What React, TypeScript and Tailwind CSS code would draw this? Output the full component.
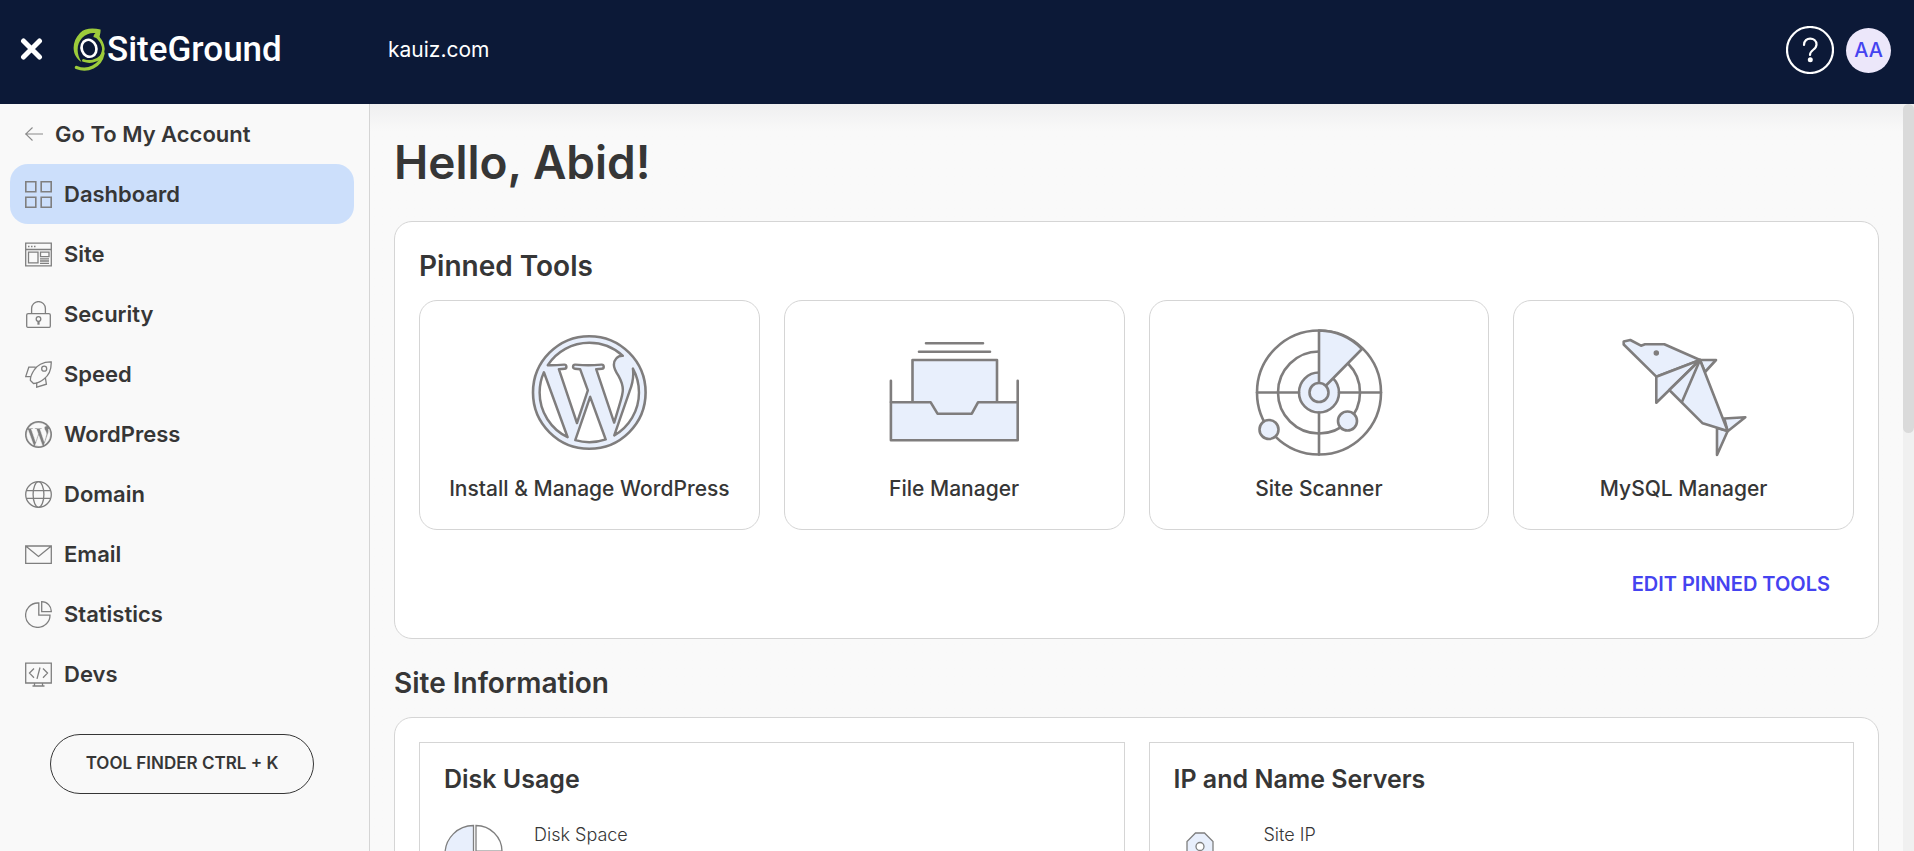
import React from "react";

const WP_CUTS =
  "M61.7 169.4l101.5 278C92.2 413 43.3 340.2 43.3 256c0-30.9 6.6-60.1 18.4-86.6zm337.9 75.9c0-26.3-9.4-44.5-17.5-58.7-10.8-17.5-20.9-32.4-20.9-49.9 0-19.6 14.8-37.8 35.7-37.8.9 0 1.8.1 2.8.2-37.9-34.7-88.3-55.9-143.7-55.9-74.3 0-139.7 38.1-177.8 95.9 5 .2 9.7.3 13.7.3 22.2 0 56.7-2.7 56.7-2.7 11.5-.7 12.8 16.2 1.4 17.5 0 0-11.5 1.3-24.3 2l77.5 230.4L249.8 247l-33.1-90.8c-11.5-.7-22.3-2-22.3-2-11.5-.7-10.1-18.2 1.3-17.5 0 0 35.1 2.7 56 2.7 22.2 0 56.7-2.7 56.7-2.7 11.5-.7 12.8 16.2 1.4 17.5 0 0-11.5 1.3-24.3 2l76.9 228.7 21.2-70.9c9-29.4 16-50.5 16-68.7zm-139.9 29.3l-63.8 185.5c19.1 5.6 39.2 8.7 60.1 8.7 24.8 0 48.5-4.3 70.6-12.1-.6-.9-1.1-1.9-1.5-2.9l-65.4-179.2zm183-120.7c.9 6.8 1.4 14 1.4 21.9 0 21.6-4 45.8-16.2 76.2l-65 187.9C426.2 403 468.7 334.5 468.7 256c0-37-9.4-71.8-26-102.1z";

function NavIcon({ children }: { children: React.ReactNode }) {
  return (
    <svg viewBox="0 0 27 27" className="size-[27px] shrink-0" fill="none" stroke="#7f7f7f" strokeWidth="1.3" aria-hidden="true">
      {children}
    </svg>
  );
}

const navItems: { label: string; icon: React.ReactNode }[] = [
  {
    label: "Dashboard",
    icon: <path strokeWidth="1.6" d="M.8.8h10v10h-10zM16.2.8h10v10h-10zM.8 16.2h10v10h-10zM16.2 16.2h10v10h-10z" />,
  },
  {
    label: "Site",
    icon: (
      <>
        <path d="M.7 2.2h25.6v22.6H.7zM.7 8.5h25.6M3.5 11.200h9.500v10.600h-9.500zM15.500 11.200h8.500v4.500h-8.500zM15 17.800h9M15 20h9M15 22.300h9" />
        <path strokeWidth="1.600" d="M3 5.500h1.500M6 5.500h1.500M9 5.500h1.500" />
      </>
    ),
  },
  {
    label: "Security",
    icon: (
      <>
        <rect x="1.700" y="12.600" width="23.600" height="13.800" rx="1.500" />
        <path d="M6.600 12.600V7.500a6.900 6.900 0 0 1 13.800 0v5.100" />
        <circle cx="13.500" cy="18" r="2.300" />
        <path strokeWidth="2.200" d="M13.500 20v3.700" />
      </>
    ),
  },
  {
    label: "Speed",
    icon: (
      <>
        <path d="M26.200.8C18 .6 11.500 4.500 8.800 9.500 6.600 13 5.200 16.500 5.400 19.500l3.100 3c3.500-.3 7-1.500 10.500-4.500 5-3.800 7.500-9.500 7.200-17.200z" />
        <circle cx="19.200" cy="7.700" r="2.500" />
        <path d="M10.600 6.200H3.800L.7 15.600h5.200M20.400 16.800l1 6.400-9.700 3v-4.700" />
      </>
    ),
  },
  {
    label: "WordPress",
    icon: (
      <>
        <circle cx="13.500" cy="13.500" r="13.500" fill="#7f7f7f" stroke="none" />
        <g transform="translate(-.44 -.44) scale(.05445)">
          <path d={WP_CUTS} fill="#f9f9f9" stroke="#f9f9f9" strokeWidth="10" />
        </g>
      </>
    ),
  },
  {
    label: "Domain",
    icon: (
      <>
        <circle cx="13.500" cy="13.500" r="12.800" />
        <ellipse cx="13.500" cy="13.500" rx="5.400" ry="12.800" />
        <path d="M1.500 9.700h24M1.500 17.300h24" />
      </>
    ),
  },
  { label: "Email", icon: <path d="M.7 5h25.600v17.300H.7zM.7 5l12.800 10.500L26.300 5" /> },
  {
    label: "Statistics",
    icon: <path d="M13.800 2h-1.300A12.200 12.200 0 1 0 25 14.200H13.800zM16.700.7v10h9.600a9.600 9.600 0 0 0-9.600-10z" />,
  },
  {
    label: "Devs",
    icon: <path d="M.7 2.200h25.600V22H.7zM9.500 22v2.800M17.500 22v2.800M7.500 25h12M9 7.500l-4.500 4.600L9 16.700M18 7.500l4.500 4.600-4.500 4.600M15 6.500l-3 11.300" />,
  },
];

function ToolSvg({ children }: { children: React.ReactNode }) {
  return (
    <svg viewBox="0 0 132 132" className="size-[132px]" fill="#e8effc" stroke="#7f7d7d" strokeWidth="2.600" strokeLinejoin="round" strokeLinecap="round" aria-hidden="true">
      {children}
    </svg>
  );
}

const tools: { label: string; icon: React.ReactNode }[] = [
  {
    label: "Install & Manage WordPress",
    icon: (
      <ToolSvg>
        <circle cx="66.300" cy="66.500" r="56.300" />
        <g transform="translate(6.500 6.700) scale(.2336)">
          <path d={WP_CUTS} fill="#fff" strokeWidth="10.500" />
        </g>
      </ToolSvg>
    ),
  },
  {
    label: "File Manager",
    icon: (
      <ToolSvg>
        <path d="M38 17.300h57M31 25.700h71" />
        <path d="M24.500 76V34h84.500v42" />
        <path d="M42.500 75.500H90l-6.500 12h-34z" stroke="none" />
        <path d="M2.900 76.300h39.800l6.800 11.400h34.300L90 76.300h39.700v38H2.900z" />
        <path d="M2.900 54.800V76M129.700 54.800V76" />
      </ToolSvg>
    ),
  },
  {
    label: "Site Scanner",
    icon: (
      <ToolSvg>
        <circle cx="66" cy="66.500" r="62" fill="none" />
        <circle cx="66" cy="66.500" r="41" fill="none" />
        <circle cx="66" cy="66.500" r="20" />
        <path d="M4 66.500h42M86 66.500h42M66 86.500v42" />
        <path d="M66 66.500v-62a62 62 0 0 1 43 18.500z" stroke="none" />
        <path d="M66 58V4.500A62 62 0 0 1 109 23L73 59.500" />
        <circle cx="66" cy="66.500" r="9.500" />
        <circle cx="16" cy="103.500" r="9.500" />
        <circle cx="94.500" cy="95" r="9.500" />
      </ToolSvg>
    ),
  },
  {
    label: "MySQL Manager",
    icon: (
      <ToolSvg>
        <path d="M82 34h16L87 46zM106.300 92.500l21-1.200-17.600 14zM99 102v27l10.700-24z" />
        <path d="M82 34 46.300 18.300H27l-4 1.400L12.300 14l-6.600 1.500v3L38.300 50.700z" />
        <path d="M38.300 50.700v26L82 34z" />
        <path d="M82 34 51.300 64l33.400 33.300 25 7.700z" />
        <path d="M82 34 64 75.700" />
        <circle cx="38.300" cy="27" r="2" fill="#7f7d7d" strokeWidth="1.500" />
      </ToolSvg>
    ),
  },
];

function Logo() {
  return (
    <a href="#home" aria-label="SiteGround" className="flex h-11 items-center gap-0.5 text-white">
      <svg viewBox="0 0 32 44" className="h-11 w-8 shrink-0" fill="none" aria-hidden="true">
        <path d="M27.500 1.500C20 0 12-.2 7 5-2 14-1.500 28 8.500 34c-5-8-5.500-17 .5-24C13 5.500 18 4.500 22.500 5c-1.500 1.500-2 2.500-2 4 3 .5 5 2.500 6 4.500C25.500 9 28 6 27.500 1.500z" fill="#9ccb3b" />
        <path d="M25.500 10c6 7 6 14 2 19-4 4.500-11 5.500-17 3.500" stroke="#9ccb3b" strokeWidth="2.800" strokeLinecap="round" />
        <path d="M3.500 39.500c11 4.500 24-1 26.500-14" stroke="#9ccb3b" strokeWidth="3.400" strokeLinecap="round" />
        <ellipse cx="16" cy="20.300" rx="7.300" ry="8.600" transform="rotate(-20 16 20.300)" stroke="#fff" strokeWidth="2.600" />
      </svg>
      <span className="font-[Roboto,sans-serif] text-[35px] leading-[44px] font-medium">SiteGround</span>
    </a>
  );
}

export default function App() {
  return (
    <div className="flex h-screen flex-col overflow-hidden bg-[#f9f9f9] font-[Inter,sans-serif] text-[#363636]">
      <header className="flex h-[104px] shrink-0 items-center bg-[#0c1937] pr-[23px] pb-1 pl-5 text-white">
        <div className="flex w-[368px] items-center gap-[29px]">
          <button type="button" aria-label="Close menu">
            <svg viewBox="0 0 24 24" className="size-6" stroke="#fff" strokeWidth="5" strokeLinecap="round" aria-hidden="true">
              <path d="M3.500 3l16 16M19.500 3l-16 16" />
            </svg>
          </button>
          <Logo />
        </div>
        <span className="text-[21px]">kauiz.com</span>
        <div className="ml-auto flex items-center gap-3">
          <button type="button" aria-label="Help">
            <svg viewBox="0 0 48 48" className="size-12" fill="none" stroke="#fff" strokeLinecap="round" aria-hidden="true">
              <circle cx="24" cy="24" r="23" strokeWidth="2.200" />
              <path d="M18 19c0-9 12.500-8 12.500-.5C30.500 24 24 23.500 24 29" strokeWidth="2.200" />
              <circle cx="24.300" cy="33.700" r="2.500" fill="#fff" stroke="none" />
            </svg>
          </button>
          <button type="button" aria-label="Account AA" className="size-[45px] rounded-full bg-[#ece7fa] text-xl font-medium text-[#4543f0]">
            AA
          </button>
        </div>
      </header>

      <div className="flex min-h-0 flex-1">
        <aside className="flex w-[370px] shrink-0 flex-col border-r border-[#d5d5d5] pr-[15px] pl-2.5">
          <nav className="flex flex-col text-[22px] font-semibold" aria-label="Main">
            <a href="#account" className="flex h-[60px] items-center gap-3 pl-[15px]">
              <svg viewBox="0 0 18 14" className="h-3.5 w-[18px]" fill="none" stroke="#8a8a8a" strokeWidth="1.100" aria-hidden="true">
                <path d="M0 7h18M7.500.5.700 7l6.800 6.500" />
              </svg>
              Go To My Account
            </a>
            {navItems.map((item, i) => (
              <a
                key={item.label}
                href={"#" + item.label.toLowerCase()}
                aria-current={i === 0 ? "page" : undefined}
                className={
                  i === 0
                    ? "flex h-[60px] items-center gap-3 rounded-[18px] bg-[#ccdffb] pl-[15px]"
                    : "flex h-[60px] items-center gap-3 rounded-[18px] pl-[15px]"
                }
              >
                <NavIcon>{item.icon}</NavIcon>
                {item.label}
              </a>
            ))}
          </nav>
          <button type="button" className="mx-10 mt-[30px] h-[60px] rounded-full border border-[#363636] text-[17px] font-semibold">
            TOOL FINDER CTRL + K
          </button>
        </aside>

        <main className="min-w-0 flex-1 overflow-hidden bg-linear-to-b from-[#efeff0] to-[#f9f9f9] to-[28px] px-6 pt-7">
          <h1 className="text-[46px] leading-[60px] font-semibold">Hello, Abid!</h1>

          <section className="mt-[29px] rounded-[18px] border border-[#d5d5d5] bg-white p-6">
            <h2 className="text-[28px] leading-10 font-semibold">Pinned Tools</h2>
            <div className="mt-3.5 grid grid-cols-4 gap-6">
              {tools.map((tool) => (
                <a key={tool.label} href="#tool" className="flex h-[230px] flex-col items-center rounded-[18px] border border-[#d5d5d5] pt-[25px]">
                  {tool.icon}
                  <span className="mt-4 text-[21px] leading-[30px] font-medium">{tool.label}</span>
                </a>
              ))}
            </div>
            <div className="mt-6 flex h-[60px] justify-end pr-6">
              <button type="button" className="text-xl font-semibold text-[#4543f0]">
                EDIT PINNED TOOLS
              </button>
            </div>
          </section>

          <h2 className="mt-6 text-[28px] leading-10 font-semibold">Site Information</h2>
          <section className="mt-3.5 rounded-[18px] border border-[#d5d5d5] bg-white p-6">
            <div className="grid grid-cols-2 gap-6">
              <article className="border border-[#d5d5d5] p-6">
                <h3 className="text-[25px] leading-6 font-semibold">Disk Usage</h3>
                <div className="mt-8 flex gap-[30px]">
                  <svg viewBox="0 0 60 60" className="size-[60px]" fill="#e8effc" stroke="#7f7f7f" strokeWidth="1.300" aria-hidden="true">
                    <path d="M29.500 2.500a28.500 28.500 0 1 0 28.500 28.500H29.500z" />
                    <path d="M32 2.500v25.700h26A26 26 0 0 0 32 2.500z" fill="#fff" />
                  </svg>
                  <p className="text-lg leading-6 font-light">Disk Space</p>
                </div>
              </article>
              <article className="border border-[#d5d5d5] p-6">
                <h3 className="text-[25px] leading-6 font-semibold">IP and Name Servers</h3>
                <div className="mt-8 flex gap-[30px]">
                  <svg viewBox="0 0 60 60" className="size-[60px]" fill="#e8effc" stroke="#7f7f7f" strokeWidth="1.300" aria-hidden="true">
                    <path d="M21.500 10h9l8.500 8.500v11L30.500 38h-9L13 29.500v-11z" />
                    <circle cx="26" cy="23.500" r="4" fill="#fff" />
                  </svg>
                  <p className="text-lg leading-6 font-light">Site IP</p>
                </div>
              </article>
            </div>
          </section>
        </main>

        <div className="w-[11px] shrink-0 bg-[#f0f0f0]" aria-hidden="true">
          <div className="h-[44%] rounded-md bg-[#dadada]" />
        </div>
      </div>
    </div>
  );
}
